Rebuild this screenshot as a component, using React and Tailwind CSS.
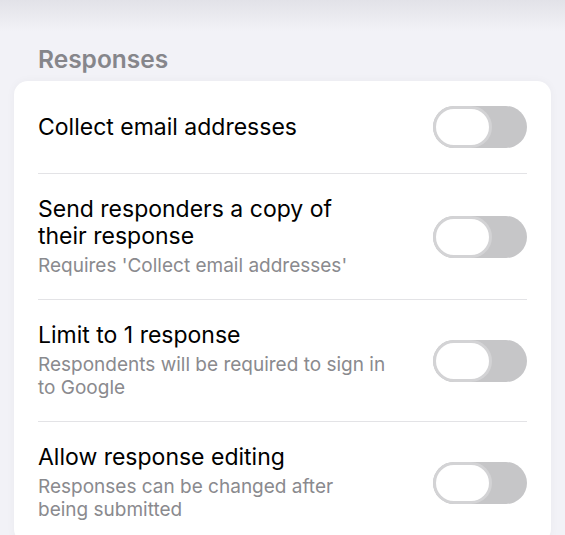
import React from "react";

function Toggle() {
  return (
    <div className="relative my-[3px] h-[42px] w-[94px] shrink-0 rounded-full bg-[#c6c6c8]">
      <div className="absolute left-0 top-0 h-[42px] w-[59px] rounded-full border-[3px] border-[#d3d3d5] bg-white" />
    </div>
  );
}

function Row({ title, subtitle, last }) {
  return (
    <div className={"flex items-center justify-between gap-4 py-[22px] " + (last ? "" : "border-b border-[#e3e3e6]")}>
      <div className="flex min-w-0 flex-col">
        <div className="text-[23px] leading-[27px] text-black">{title}</div>
        {subtitle && <div className="mt-[4px] text-[19px] leading-[23px] text-[#8a8a8e]">{subtitle}</div>}
      </div>
      <Toggle />
    </div>
  );
}

export default function App() {
  const rows = [
    { title: "Collect email addresses" },
    { title: <>Send responders a copy of<br />their response</>, subtitle: "Requires 'Collect email addresses'" },
    { title: "Limit to 1 response", subtitle: <>Respondents will be required to sign in<br />to Google</> },
    { title: "Allow response editing", subtitle: <>Responses can be changed after<br />being submitted</>, last: true },
  ];
  return (
    <div className="h-[535px] w-[565px] overflow-hidden bg-[#f2f2f7]" style={{ fontFamily: "Inter, 'Noto Sans', sans-serif" }}>
      <div className="h-[32px] bg-gradient-to-b from-[#e2e2e8] to-[#f2f2f7]" />
      <div className="px-[38px] pt-[12px] text-[24.5px] font-semibold leading-[30px] text-[#86868b]">Responses</div>
      <div className="mx-[14px] mt-[7px] rounded-[14px] bg-white px-[24px] shadow-[0_0_10px_rgba(0,0,0,0.04)]">
        {rows.map((r, i) => (
          <Row key={i} {...r} />
        ))}
      </div>
    </div>
  );
}
